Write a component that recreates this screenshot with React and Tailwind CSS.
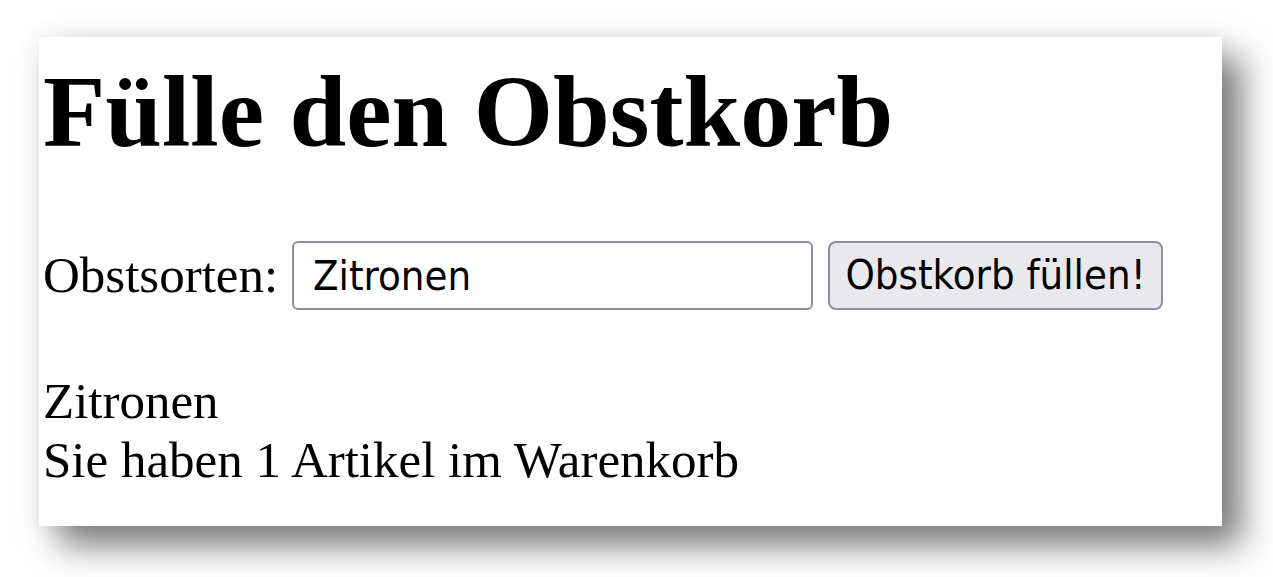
export default function App() {
  return (
    <div className="w-[1273px] h-[577px] overflow-hidden bg-white pt-[37px] pl-[39px]">
      <div className="flex flex-col w-[1183px] h-[489px] bg-white px-[4px] shadow-[0_0_24px_rgba(0,0,0,0.08),20px_20px_32px_rgba(0,0,0,0.5)] font-['Liberation_Serif',serif] text-black">
        <h1 className="mt-[24px] text-[102px] leading-none font-bold">Fülle den Obstkorb</h1>
        <div className="mt-[78px] flex items-center h-[69px]">
          <label className="shrink-0 w-[249px] text-[51px] leading-[59px]">Obstsorten:</label>
          <input
            readOnly
            value="Zitronen"
            className="w-[521px] h-[69px] border-2 border-[#8f8f9d] rounded-[6px] pl-[19px] text-[41.5px] font-['DejaVu_Sans_Condensed','Liberation_Sans',sans-serif] text-black outline-none"
          />
          <button className="ml-[15px] w-[335px] h-[69px] bg-[#e9e9ed] border-2 border-[#8f8f9d] rounded-[8px] text-[41.5px] font-['DejaVu_Sans_Condensed','Liberation_Sans',sans-serif] text-black">
            Obstkorb füllen!
          </button>
        </div>
        <div className="mt-[62px] text-[51px] leading-[59px]">
          <div>Zitronen</div>
          <div>Sie haben 1 Artikel im Warenkorb</div>
        </div>
      </div>
    </div>
  );
}
